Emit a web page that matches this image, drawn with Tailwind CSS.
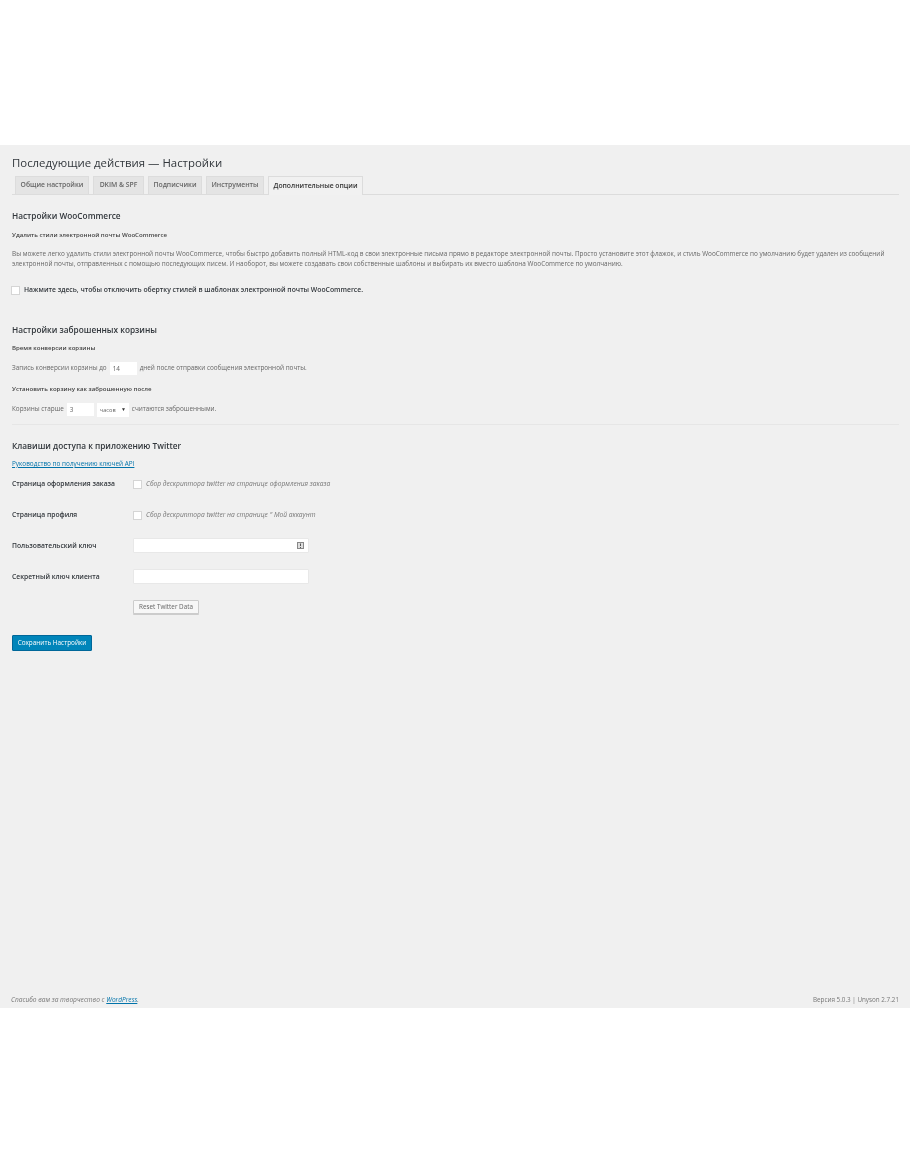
<!DOCTYPE html>
<html lang="ru"><head><meta charset="utf-8"><script src="https://cdn.jsdelivr.net/npm/@tailwindcss/browser@4"></script><title>Настройки</title></head>
<body class="bg-white font-['Open_Sans','Noto_Sans',sans-serif] text-[#444]">
<div class="h-[1155px] pt-[145px]">
<main class="h-[863px] bg-[#f0f0f0] px-3 relative blur-[0.35px]">
  <h1 class="pt-[10px] text-[11.4px] leading-[16px] text-[#32373c]">Последующие действия — Настройки</h1>
  <nav class="mt-[5px] h-[19px] flex gap-[4px] pl-[3px] border-b border-[#dcdcdc] -mr-[1px] text-[6.8px] font-semibold">
    <span class="h-[18px] w-[74px] flex items-center justify-center bg-[#e4e4e4] border border-[#dcdcdc] border-b-0 text-[#666]">Общие настройки</span>
    <span class="h-[18px] w-[51px] flex items-center justify-center bg-[#e4e4e4] border border-[#dcdcdc] border-b-0 text-[#666]">DKIM &amp; SPF</span>
    <span class="h-[18px] w-[54px] flex items-center justify-center bg-[#e4e4e4] border border-[#dcdcdc] border-b-0 text-[#666]">Подписчики</span>
    <span class="h-[18px] w-[58px] flex items-center justify-center bg-[#e4e4e4] border border-[#dcdcdc] border-b-0 text-[#666]">Инструменты</span>
    <span class="h-[19px] w-[95px] flex items-center justify-center bg-[#f1f1f1] border border-[#dcdcdc] border-b-0 text-[#333]">Дополнительные опции</span>
  </nav>
  <h2 class="mt-[15px] text-[8.25px] leading-[11px] font-semibold text-[#32373c]">Настройки WooCommerce</h2>
  <h3 class="mt-[9px] text-[6.1px] leading-[9px] font-semibold text-[#444]">Удалить стили электронной почты WooCommerce</h3>
  <p class="mt-[10px] text-[6.4px] leading-[10px] text-[#666]">Вы можете легко удалить стили электронной почты WooCommerce, чтобы быстро добавить полный HTML-код в свои электронные письма прямо в редакторе электронной почты. Просто установите этот флажок, и стиль WooCommerce по умолчанию будет удален из сообщений электронной почты, отправленных с помощью последующих писем. И наоборот, вы можете создавать свои собственные шаблоны и выбирать их вместо шаблона WooCommerce по умолчанию.</p>
  <label class="mt-[16px] -ml-[1px] flex items-center gap-[4px] h-[10px] text-[6.8px] font-semibold text-[#32373c]"><span class="w-[9px] h-[9px] bg-white border border-[#d5d5d5]"></span>Нажмите здесь, чтобы отключить обертку стилей в шаблонах электронной почты WooCommerce.</label>
  <h2 class="mt-[29px] text-[8.25px] leading-[11px] font-semibold text-[#32373c]">Настройки заброшенных корзины</h2>
  <h3 class="mt-[8px] text-[6.1px] leading-[9px] font-semibold">Время конверсии корзины</h3>
  <div class="mt-[9px] h-[14px] flex items-center text-[6.35px] text-[#666]">Запись конверсии корзины до<span class="mx-[3px] w-[27px] h-[13px] bg-white pl-[3px] leading-[13px]">14</span>дней после отправки сообщения электронной почты.</div>
  <h3 class="mt-[9px] text-[6.1px] leading-[9px] font-semibold">Установить корзину как заброшенную после</h3>
  <div class="mt-[9px] h-[14px] flex items-center text-[6.35px] text-[#666]">Корзины старше<span class="mx-[3px] w-[27px] h-[13px] bg-white pl-[3px] leading-[13px]">3</span><span class="w-[32px] h-[14px] mr-[3px] mt-[2px] bg-white flex items-center justify-between px-[3px] text-[5.6px]">часов<span class="text-[5px] text-[#333]">▼</span></span>считаются заброшенными.</div>
  <div class="mt-[8px] border-t border-[#e6e6e6] -mr-[1px]"></div>
  <h2 class="mt-[15px] text-[8.25px] leading-[11px] font-semibold text-[#32373c]">Клавиши доступа к приложению Twitter</h2>
  <a class="block mt-[8px] text-[6.4px] leading-[9px] text-[#0073aa] underline">Руководство по получению ключей API</a>
  <div class="mt-[11px] grid grid-cols-[121px_1fr] grid-rows-[31px_31px_31px_31px_31px] text-[6.75px] font-semibold text-[#32373c]">
    <div class="h-[10px] flex items-center">Страница оформления заказа</div>
    <div class="h-[10px] flex items-center gap-[4px] text-[6.65px] font-normal italic text-[#777]"><span class="w-[9px] h-[9px] bg-white border border-[#d5d5d5]"></span>Сбор дескриптора twitter на странице оформления заказа</div>
    <div class="h-[10px] flex items-center">Страница профиля</div>
    <div class="h-[10px] flex items-center gap-[4px] text-[6.65px] font-normal italic text-[#777]"><span class="w-[9px] h-[9px] bg-white border border-[#d5d5d5]"></span>Сбор дескриптора twitter на странице " Мой аккаунт</div>
    <div class="h-[10px] flex items-center">Пользовательский ключ</div>
    <div class="relative w-[176px] h-[15px] -mt-[3px] bg-white border border-[#e8e8e8] rounded-[1px]"><svg class="absolute right-[4px] top-[3px]" width="7" height="7" viewBox="0 0 7 7"><rect x="0.5" y="0.5" width="6" height="6" fill="#ddd" stroke="#888"/><path d="M3.5 1.5v2.5M3.5 5v1" stroke="#555"/></svg></div>
    <div class="h-[10px] flex items-center">Секретный ключ клиента</div>
    <div class="w-[176px] h-[15px] -mt-[3px] bg-white border border-[#e8e8e8] rounded-[1px]"></div>
    <div></div>
    <div class="w-[66px] h-[14px] -mt-[3px] flex items-center justify-center bg-[#f7f7f7] border border-[#ccc] rounded-[1px] text-[6.3px] font-normal text-[#666] shadow-[0_1px_0_#ccc]">Reset Twitter Data</div>
  </div>
  <div class="mt-[1px] w-[80px] h-[16px] flex items-center justify-center bg-[#0085ba] border border-[#006799] rounded-[1px] text-[6.4px] text-white">Сохранить Настройки</div>
  <footer class="absolute left-[11px] right-[11px] bottom-[4px] flex justify-between text-[6.3px] leading-[9px] text-[#777]">
    <span class="italic text-[6.6px]">Спасибо вам за творчество с <a class="text-[#0073aa] underline">WordPress</a>.</span><span>Версия 5.0.3 | Unyson 2.7.21</span>
  </footer>
</main>
</div>
</body></html>
